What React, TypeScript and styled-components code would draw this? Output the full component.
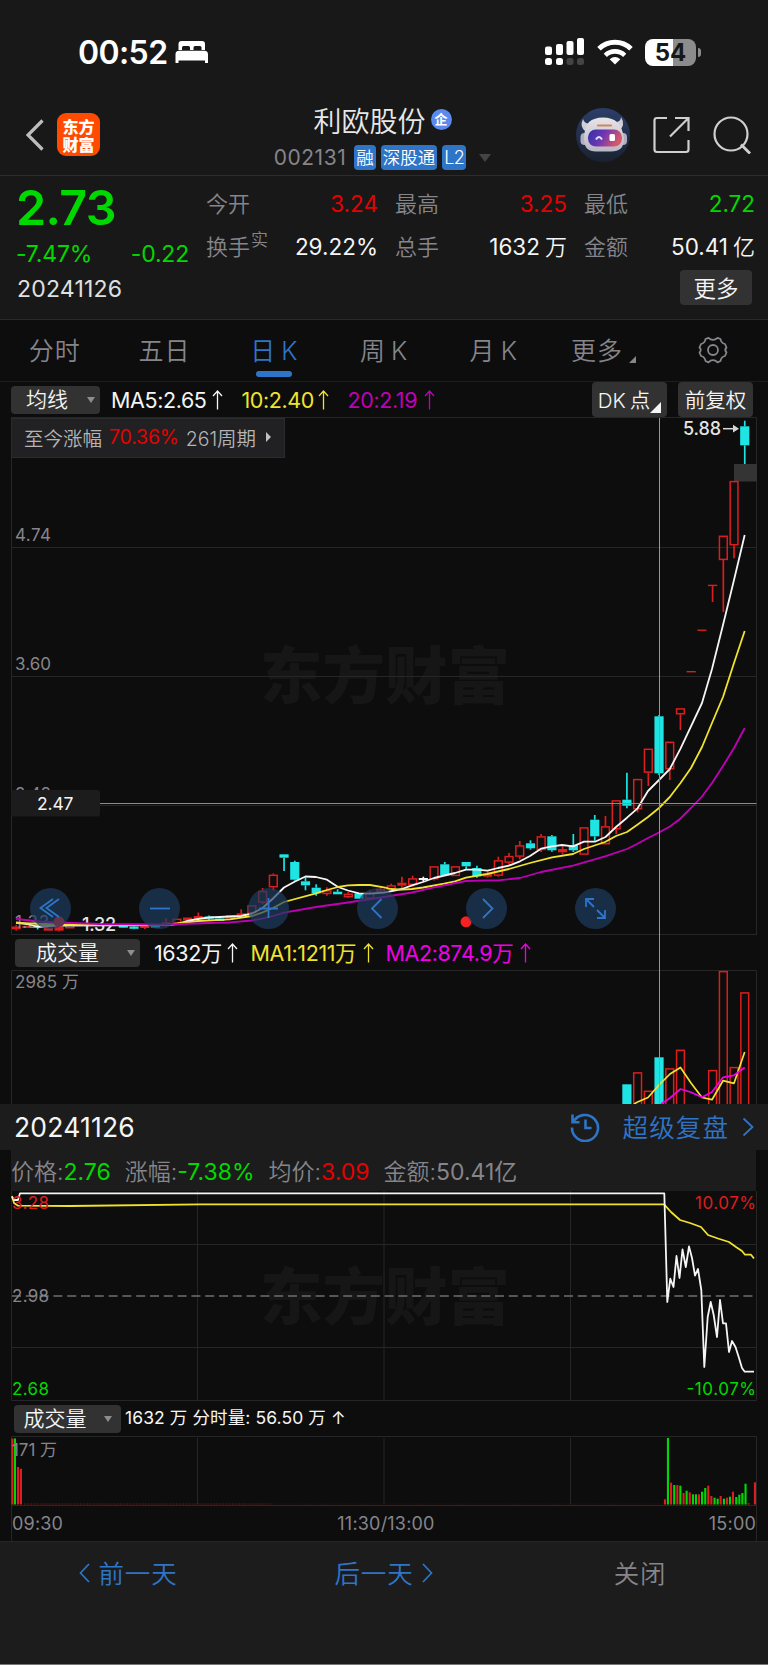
import type { ReactNode } from "react";
import styled, { createGlobalStyle, css } from "styled-components";

const color = {
  up: "#e60000",
  down: "#00d900",
  candleUp: "#dc1e1e",
  candleDown: "#1ee4e4",
  blue: "#2e75c8",
  yellow: "#f0e32e",
  magenta: "#c000b8",
  pink: "#f000e6",
  white: "#f5f5f5",
  gray: "#85858b",
  grid: "#262626",
  ground: "#0d0d0d",
  header: "#181818",
  panel: "#1c1c1c",
  button: "#323232",
};

type Candle = {
  i: number;
  kind: "hollow" | "solid" | "down" | "flat";
  high: number;
  top: number;
  bottom: number;
  low: number;
};

const c = (
  i: number,
  kind: Candle["kind"],
  high: number,
  top: number,
  bottom: number,
  low: number
): Candle => ({ i, kind, high, top, bottom, low });

const candles: Candle[] = [
  c(0, "solid", 925, 926.5, 929.3, 930.7),
  c(1, "solid", 925.5, 926, 928, 928),
  c(2, "down", 925, 926, 928, 929.5),
  c(3, "solid", 927, 927.5, 930.7, 930.7),
  c(4, "solid", 926.5, 927, 930.7, 931.5),
  c(5, "hollow", 922, 924.5, 928.3, 928.3),
  c(10, "down", 925, 925.5, 927.7, 928),
  c(11, "down", 925, 926.5, 928.8, 929.3),
  c(12, "solid", 925, 925.5, 928, 929),
  c(13, "down", 924.5, 925, 927.5, 928),
  c(14, "solid", 918.3, 922.3, 926, 926.5),
  c(15, "hollow", 918.7, 918.7, 923.5, 923.5),
  c(16, "solid", 917.5, 917.5, 920.5, 921),
  c(17, "solid", 912.5, 916, 919, 920),
  c(18, "down", 915.5, 916.5, 918.7, 920),
  c(19, "down", 917, 918.5, 921, 921),
  c(20, "hollow", 915.3, 915.3, 918.5, 918.5),
  c(21, "solid", 909.3, 913.3, 915.3, 916.5),
  c(22, "hollow", 905.3, 905.3, 913.3, 913.3),
  c(23, "hollow", 888, 891, 902.7, 904.3),
  c(24, "hollow", 873.3, 874.7, 887.3, 890.7),
  c(25, "down", 854.3, 854.3, 857.7, 871),
  c(26, "down", 860.7, 862, 879.7, 880.7),
  c(27, "down", 877.3, 881.3, 885.3, 890.3),
  c(28, "down", 884.3, 887.7, 893.3, 895.7),
  c(29, "hollow", 887.3, 890.3, 894, 895.7),
  c(30, "down", 889.3, 891.7, 894.3, 894.3),
  c(31, "hollow", 892, 893.7, 897.3, 898),
  c(32, "down", 893.3, 893.3, 898.7, 899),
  c(33, "hollow", 890.7, 892.7, 898.7, 900),
  c(34, "hollow", 887.3, 889, 892, 892),
  c(35, "hollow", 883.7, 885.3, 890, 890),
  c(36, "solid", 876.7, 882.7, 885.7, 888),
  c(37, "hollow", 875.7, 878.3, 885, 886.7),
  c(38, "flat", 876.7, 878, 880, 881.7),
  c(39, "hollow", 866.3, 866.3, 879.3, 880.5),
  c(40, "down", 862, 864.3, 875.3, 875.3),
  c(41, "hollow", 866.3, 866.3, 876, 876),
  c(42, "down", 862, 862, 866.3, 869.3),
  c(43, "down", 865.7, 868, 876.3, 877.7),
  c(44, "solid", 871.7, 873.7, 876.7, 877.7),
  c(45, "hollow", 856.7, 860.3, 875.7, 876.7),
  c(46, "hollow", 853, 856, 862.7, 865),
  c(47, "hollow", 841, 845.3, 856.7, 859.3),
  c(48, "down", 840.3, 843.3, 848.3, 849.7),
  c(49, "hollow", 834, 836.3, 850, 852),
  c(50, "down", 835, 836.3, 850.3, 851.7),
  c(51, "solid", 846.3, 849, 852.3, 854.3),
  c(52, "down", 834, 845, 850.3, 852),
  c(53, "hollow", 827.3, 827.3, 854.7, 854.7),
  c(54, "down", 815, 819.7, 836.3, 840.7),
  c(55, "hollow", 816, 826.3, 844.3, 844.3),
  c(56, "hollow", 800.3, 800.3, 829.3, 834),
  c(57, "down", 772.7, 799.7, 805.7, 808.3),
  c(58, "hollow", 779, 779, 809.3, 812.3),
  c(59, "hollow", 748.7, 748.7, 772.7, 786),
  c(60, "down", 715, 716.3, 773.3, 775),
  c(61, "hollow", 741.7, 741.7, 769.3, 780),
  c(62, "hollow", 708.3, 708.3, 714.3, 730),
  c(63, "solid", 671, 671, 672.4, 672.4),
  c(64, "solid", 629.5, 629.5, 630.9, 630.9),
  c(65, "solid", 584.7, 584.7, 586.1, 602),
  c(66, "hollow", 535.7, 535.7, 560, 612),
  c(67, "hollow", 481, 481, 545.3, 558.3),
  c(68, "down", 420.7, 426.3, 445.3, 464),
];

const ma5 =
  "16,922.5 27,924 37,926.5 59,925.5 166,925 177,924 187,921 198,919 209,917.5 241,916 252,913.5 262.6,908 273,898.5 284,887.5 295,881.5 305.5,876.5 316,877 327,879.7 338,887 348,890.5 359,893.3 370,893.7 384,892.7 402,889 412,885.3 423,882 434,878 455,873 466,869.7 477,869.7 487.6,870.7 498,868 509,865.7 520,861.3 530,856 541,848.7 552,846.3 562,845 573,846.3 584,841.7 595,841.7 605.5,837 616,827 627,817.7 637.6,808.3 648,791 659,780 669.8,769 680.5,748.7 702,703 712,669 723,625 734,580 744.7,535";
const ma10 =
  "16,923 60,924.5 100,925 166,925 198,921 230,919.3 252,916 262,912.7 273,908 284,902 316,893.3 327,890 338,887 348,885.3 359,885 370,885 384,887.3 391,889 402,889.7 412,889 423,887.5 444,883.7 455,881.3 466,877.7 487,874 509,869 530,863 552,857.3 573,854 584,849 605,842 616,836 627,832 637,825 648,817 659,808 669.8,797 680.5,783 691,768 702,747 712,723 723,697 734,663 744.7,631";
const ma20 =
  "16,919 40,921.5 60,922.5 100,924 166,924.5 209,923 230,922.3 252,920.5 262,918.7 273,916 284,912.7 316,907 348,902.5 384,897 412,892.5 434,887.3 466,881 487,880.3 498,880.3 520,878 541,872 573,865.7 605,856.3 627,849 637,844 648,838 659,832.5 670,826.5 680,819 691,808 702,796.5 712,783 723,766 734,748 744.7,728";

const volumeBars: [number, number, boolean][] = [
  [57, 1084.3, false],
  [58, 1072.3, true],
  [59, 1090.7, true],
  [60, 1057.3, false],
  [61, 1068.3, true],
  [62, 1049.7, true],
  [65, 1070, true],
  [66, 971, true],
  [67, 1067, true],
  [68, 992.3, true],
];

const minutePrice =
  "12,1197 14,1200 18,1200 20,1193.3 664.3,1193.3 667.3,1302 670.3,1278.7 673.5,1287 676.5,1256 679.5,1278 682.5,1249.5 685.8,1267 689,1246.5 692,1258 695,1275.5 698,1269 701.3,1290 704.3,1367 707.7,1317 710.7,1302 713.7,1315 717,1337 720,1300 723,1323.3 726,1323.3 729,1352 732,1341 735.5,1347 738.7,1357 742,1368 744.7,1371.7 754,1371.7";
const minuteAverage =
  "12,1196 14,1203 18,1205.7 70,1206 200,1204.3 664,1204.3 671,1212 680,1220 690,1223 701,1227 708,1235 718,1238.5 729,1242 736,1247 742,1251 745,1254.7 751,1254.7 754,1258.5";

const minuteVolume: [number, number, "r" | "g"][] = [
  [12.4, 1438.5, "r"],
  [15, 1438.5, "g"],
  [18, 1467, "r"],
  [21, 1468.7, "r"],
  [665, 1499.3, "r"],
  [668, 1438, "g"],
  [671.1, 1482.7, "r"],
  [674.3, 1485, "g"],
  [677.4, 1485, "r"],
  [680.4, 1485.7, "g"],
  [683.6, 1493, "r"],
  [686.7, 1490.7, "g"],
  [689.8, 1492.3, "r"],
  [693, 1494.3, "g"],
  [696, 1494.3, "g"],
  [699, 1494.3, "r"],
  [702.1, 1491.7, "g"],
  [705.3, 1488, "g"],
  [708.3, 1485.7, "r"],
  [711.4, 1496, "r"],
  [714.6, 1497.7, "g"],
  [717.7, 1498.7, "g"],
  [720.7, 1496, "r"],
  [724, 1498.7, "g"],
  [727, 1497.7, "r"],
  [730, 1496.7, "g"],
  [733, 1491.7, "r"],
  [736.3, 1497, "g"],
  [739.4, 1494.7, "g"],
  [742.4, 1493, "g"],
  [745.6, 1483.7, "g"],
  [748.6, 1503.3, "r"],
  [755, 1482.3, "r"],
];

const candleX = (i: number) => 16.2 + i * 10.714;

function CandleShape({ kind, i, high, top, bottom, low }: Candle) {
  const x = candleX(i);
  const stroke =
    kind === "down" ? color.candleDown : kind === "flat" ? color.white : color.candleUp;
  const hollow = kind === "hollow";
  return (
    <g stroke={stroke} strokeWidth={1.7}>
      {high < top && <line x1={x} x2={x} y1={high} y2={top} />}
      {low > bottom && <line x1={x} x2={x} y1={bottom} y2={low} />}
      <rect
        x={x - (hollow ? 3.9 : 4.6)}
        y={hollow ? top + 0.6 : top}
        width={hollow ? 7.8 : 9.2}
        height={Math.max(hollow ? bottom - top - 1.2 : bottom - top, 1)}
        fill={hollow ? "none" : stroke}
        strokeWidth={hollow ? 1.5 : 0}
      />
    </g>
  );
}

function Watermark({ y }: { y: number }) {
  return (
    <WatermarkText x={260} y={y} textLength={250} lengthAdjust="spacingAndGlyphs">
      东方财富
    </WatermarkText>
  );
}

function PriceChart() {
  return (
    <ChartSvg viewBox="0 417 768 518" height={518}>
      <Watermark y={699} />
      <path
        d="M11.5 417.5H756.5V935M11.5 417V935M11.5 547.5H756.5M11.5 676.5H756.5M11.5 805.5H756.5M11.5 934.5H756.5"
        stroke={color.grid}
        fill="none"
      />
      <AxisText x={15} y={541} textLength={36}>4.74</AxisText>
      <AxisText x={15} y={670} textLength={36}>3.60</AxisText>
      <AxisText x={15} y={799.5} textLength={36}>2.48</AxisText>
      <rect x={734} y={464} width={23} height={17.5} fill="#343434" />
      {candles.map((candle) => (
        <CandleShape key={candle.i} {...candle} />
      ))}
      <AxisText x={15} y={928} textLength={34}>1.32</AxisText>
      <line x1={70} x2={82} y1={924.5} y2={924.5} stroke={color.white} />
      <BoldLabel x={82} y={930.5} textLength={34}>1.32</BoldLabel>
      <g fill="none" strokeWidth={1.8} strokeLinejoin="round">
        <polyline points={ma5} stroke={color.white} />
        <polyline points={ma10} stroke={color.yellow} />
        <polyline points={ma20} stroke={color.magenta} />
      </g>
      <circle cx={59} cy={921.8} r={5.5} fill="#f52222" />
      <circle cx={466} cy={921.8} r={5.5} fill="#f52222" />
      <BoldLabel x={683} y={435} textLength={38}>5.88</BoldLabel>
      <path d="M723 428.7H736" stroke="#d8d8d8" strokeWidth={1.5} />
      <path d="M733 424.8L739 428.7L733 432.6Z" fill="#d8d8d8" />
      <path d="M11.5 803.5H756.5" stroke="#8c8c8c" />
      <rect x={11} y={790} width={89} height={26.5} rx={3} fill="#1c1c1c" />
      <CursorText x={37} y={810} textLength={36.5}>2.47</CursorText>
    </ChartSvg>
  );
}

function VolumeChart() {
  return (
    <ChartSvg viewBox="0 970 768 134" height={134}>
      <path d="M11.5 1104V970.5H756.5V1104" stroke={color.grid} fill="none" />
      <AxisText x={15} y={987.5} textLength={64}>2985 万</AxisText>
      {volumeBars.map(([i, top, up]) => (
        <rect
          key={i}
          x={candleX(i) - (up ? 3.9 : 4.6)}
          y={up ? top + 0.6 : top}
          width={up ? 7.8 : 9.2}
          height={140}
          fill={up ? "none" : color.candleDown}
          stroke={up ? color.candleUp : "none"}
          strokeWidth={1.5}
        />
      ))}
      <g fill="none" strokeWidth={1.7} strokeLinejoin="round">
        <polyline
          points="634,1104 637.6,1102 648,1097.5 659,1085 670,1074 680.5,1067.5 691,1083 702,1097.5 712,1099.7 723,1080.7 734,1083.3 744.7,1052"
          stroke={color.yellow}
        />
        <polyline
          points="661,1104 670,1098 680.5,1089 691,1092.3 702,1097.3 712,1092 723,1077.3 734,1075.3 744.7,1067.5"
          stroke={color.pink}
        />
      </g>
    </ChartSvg>
  );
}

function MinuteChart() {
  return (
    <ChartSvg viewBox="0 1191 768 210" height={210}>
      <Watermark y={1320} />
      <path
        d="M11.5 1191V1400.5H756.5V1191M11.5 1244.5H756.5M11.5 1347.5H756.5M197.5 1191V1400M384 1191V1400M570.5 1191V1400"
        stroke={color.grid}
        fill="none"
      />
      <path d="M12 1296H756" stroke="#6f6f74" strokeWidth={1.4} strokeDasharray="9 4.8" />
      <g fill="none" strokeWidth={1.8} strokeLinejoin="round">
        <polyline points={minuteAverage} stroke={color.yellow} />
        <polyline points={minutePrice} stroke={color.white} />
      </g>
      <AxisText x={12} y={1208.5} textLength={37} fill={color.candleUp}>3.28</AxisText>
      <AxisText x={12} y={1301.5} textLength={37}>2.98</AxisText>
      <AxisText x={12} y={1394.5} textLength={37} fill={color.down}>2.68</AxisText>
      <AxisText x={695} y={1208.5} textLength={61} fill={color.candleUp}>10.07%</AxisText>
      <AxisText x={686.5} y={1394.5} textLength={69.5} fill={color.down}>-10.07%</AxisText>
    </ChartSvg>
  );
}

function MinuteVolume() {
  return (
    <ChartSvg viewBox="0 1436 768 70" height={70}>
      <path
        d="M11.5 1506V1436.5H756.5V1506M11.5 1505.5H756.5M197.5 1438V1504M384 1438V1504M570.5 1438V1504"
        stroke={color.grid}
        fill="none"
      />
      <path d="M24 1504H270" stroke="#701212" strokeWidth={1} strokeDasharray="2 1.1" />
      <path d="M270 1504H665" stroke="#401010" strokeWidth={0.7} strokeDasharray="2 1.1" />
      {minuteVolume.map(([x, top, side]) => (
        <rect
          key={x}
          x={x - 1.1}
          y={top}
          width={2.1}
          height={1504.5 - top}
          fill={side === "r" ? color.candleUp : color.down}
        />
      ))}
      <AxisText x={12} y={1455.5} textLength={45}>171 万</AxisText>
    </ChartSvg>
  );
}

function ArrowUp() {
  return (
    <svg width="11" height="20" viewBox="0 0 11 20" fill="none" stroke="currentColor" strokeWidth="1.300">
      <path d="M5.500 19.500V1M1 6L5.500 1L10 6" />
    </svg>
  );
}

function StatusBar() {
  return (
    <StatusRow>
      <Clock>00:52</Clock>
      <svg width="34" height="24" viewBox="0 0 34 24" fill="#fff">
        <path d="M3.500 10V4Q3.500 1 6.500 1H27Q30 1 30 4V10H26.500V7.500Q26.500 6 25 6H20Q18.500 6 18.500 7.500V10H15V7.500Q15 6 13.500 6H8.500Q7 6 7 7.500V10Z" />
        <path d="M4 10.800H29.500Q33 10.800 33 14.500V23H30V20.500H3.500V23H.5V14.500Q.5 10.800 4 10.800Z" />
      </svg>
      <StatusIcons>
        <svg width="40" height="28" viewBox="0 0 40 28" fill="#fff">
          <rect x="0" y="8.500" width="7" height="8.500" rx="2" />
          <rect x="11" y="6" width="7" height="11" rx="2" />
          <rect x="21.500" y="3" width="7" height="14" rx="2" />
          <rect x="32" y="0" width="7" height="17" rx="2" />
          <rect x="0" y="20" width="7" height="7" rx="2.500" />
          <rect x="11" y="20" width="7" height="7" rx="2.500" />
          <rect x="21.500" y="20" width="7" height="7" rx="2.500" fill="#444" />
          <rect x="32" y="20" width="7" height="7" rx="2.500" fill="#444" />
        </svg>
        <svg width="36" height="26" viewBox="0 0 36 26" fill="none" stroke="#fff" strokeWidth="5">
          <path d="M2 9.800A23 23 0 0 1 34 9.800" />
          <path d="M8.300 16.300A14 14 0 0 1 27.700 16.300" strokeWidth="4.600" />
          <path d="M12.700 20.300Q18 15.500 23.300 20.300L18 25.500Z" fill="#fff" stroke="none" />
        </svg>
        <Battery>54</Battery>
      </StatusIcons>
    </StatusRow>
  );
}

function RobotAvatar() {
  return (
    <svg width="54" height="54" viewBox="0 0 54 54">
      <defs>
        <linearGradient id="sky" x1="0" x2="0" y1="0" y2="1">
          <stop offset="0" stopColor="#2c3e69" />
          <stop offset="1" stopColor="#192231" />
        </linearGradient>
        <linearGradient id="visor" x1="0" x2="1" y1="0" y2="0.3">
          <stop offset="0" stopColor="#2d31a8" />
          <stop offset="0.5" stopColor="#6f35b4" />
          <stop offset="1" stopColor="#d5586a" />
        </linearGradient>
        <linearGradient id="shell" x1="0" x2="0" y1="0" y2="1">
          <stop offset="0" stopColor="#e8e4e6" />
          <stop offset="1" stopColor="#b9b6c4" />
        </linearGradient>
      </defs>
      <circle cx="27" cy="27" r="27" fill="url(#sky)" />
      <path
        d="M7 11Q3 19 10 24L16 15Q9 17 7 11ZM45 9Q50 17 43 23L37 14Q45 15 45 9Z"
        fill="#d0ced6"
      />
      <rect x="4.500" y="25" width="8" height="12" rx="4" fill="#b0aebf" />
      <rect x="43" y="25" width="8" height="12" rx="4" fill="#b0aebf" />
      <path
        d="M8 31Q8 20 13 14Q18 9.500 27 9.500Q36 9.500 41 14Q47 20 48 31Q48 43.500 35 43.500H20Q8 43.500 8 31Z"
        fill="url(#shell)"
      />
      <rect x="12" y="21.500" width="34" height="17" rx="8" fill="url(#visor)" />
      <path d="M22 17.500H35" stroke="#c98962" strokeWidth="2.200" strokeLinecap="round" />
      <path d="M20 31.500Q23 26.500 26 31.500" stroke="#d9e6ff" strokeWidth="2" fill="none" />
      <rect x="33.500" y="26" width="5.500" height="7" rx="1.500" fill="#fff" />
    </svg>
  );
}

function Header() {
  return (
    <HeaderRow>
      <HeaderLeft>
        <svg width="18" height="32" viewBox="0 0 18 32" fill="none" stroke="#bdbdbd" strokeWidth="3.200">
          <path d="M16.500 1.500L2 16L16.500 30.500" />
        </svg>
        <Logo>
          东方
          <br />
          财富
        </Logo>
      </HeaderLeft>
      <HeaderCenter>
        <StockName>
          利欧股份
          <CompanyMark>企</CompanyMark>
        </StockName>
        <StockMeta>
          <StockCode>002131</StockCode>
          <Badge>融</Badge>
          <Badge>深股通</Badge>
          <Badge $latin>L2</Badge>
          <MetaCaret $size={6} $color="#444" />
        </StockMeta>
      </HeaderCenter>
      <HeaderRight>
        <RobotAvatar />
        <svg width="37" height="38" viewBox="0 0 37 38" fill="none" stroke="#cfcfcf" strokeWidth="2.200">
          <path d="M14 2H4Q1.500 2 1.500 4.500V33.500Q1.500 36 4 36H33Q35.500 36 35.500 33.500V24" />
          <path d="M22 2H35.500V15M35.500 2L17 20.500" />
        </svg>
        <svg width="38" height="38" viewBox="0 0 38 38" fill="none" stroke="#cfcfcf" strokeWidth="2.200">
          <circle cx="18" cy="18" r="16.500" />
          <path d="M28 28.500L37 37.500" strokeWidth="2.800" />
        </svg>
      </HeaderRight>
    </HeaderRow>
  );
}

type StatProps = {
  label: ReactNode;
  value: string;
  tone?: string;
  unit?: string;
};

function Stat({ label, value, tone = color.white, unit }: StatProps) {
  return (
    <StatCell>
      <StatLabel>{label}</StatLabel>
      <StatValue $tone={tone}>
        {value}
        {unit && <Unit>{unit}</Unit>}
      </StatValue>
    </StatCell>
  );
}

function Quote() {
  return (
    <QuoteBlock>
      <QuoteTop>
        <div>
          <LastPrice>2.73</LastPrice>
          <Change>
            <span>-7.47%</span>
            <span>-0.22</span>
          </Change>
        </div>
        <StatGrid>
          <Stat label="今开" value="3.24" tone={color.up} />
          <Stat label="最高" value="3.25" tone={color.up} />
          <Stat label="最低" value="2.72" tone={color.down} />
          <Stat
            label={
              <>
                换手<sup>实</sup>
              </>
            }
            value="29.22%"
          />
          <Stat label="总手" value="1632" unit="万" />
          <Stat label="金额" value="50.41" unit="亿" />
        </StatGrid>
      </QuoteTop>
      <QuoteBottom>
        <QuoteDate>20241126</QuoteDate>
        <MoreButton>更多</MoreButton>
      </QuoteBottom>
    </QuoteBlock>
  );
}

function Tabs() {
  return (
    <TabRow>
      <Tab>分时</Tab>
      <Tab>五日</Tab>
      <Tab $active>日 K</Tab>
      <Tab>周 K</Tab>
      <Tab>月 K</Tab>
      <Tab>
        更多
        <Corner $size={7} $color={color.gray} />
      </Tab>
      <Tab>
        <svg width="30" height="28" viewBox="0 0 30 28" fill="none" stroke={color.gray} strokeWidth="1.800">
          <circle cx="15" cy="14" r="5" />
          <path
            d="M10.500 1.800Q12.500 3.800 15 3.800T19.500 1.800L22.500 3Q23 7 27 8L28.500 11.500Q26 14 28.500 16.500L27 20Q23 21 22.500 25L19.500 26.300Q17.500 24.200 15 24.200T10.500 26.300L7.500 25Q7 21 3 20L1.500 16.500Q4 14 1.500 11.500L3 8Q7 7 7.500 3Z"
            strokeLinejoin="round"
          />
        </svg>
      </Tab>
    </TabRow>
  );
}

function FloatingControls() {
  return (
    <ControlRow>
      <Control>
        <path d="M23 11L10.500 20L23 29M29 11L16.500 20L29 29" />
      </Control>
      <Control>
        <path d="M11 20.500H31" />
      </Control>
      <Control>
        <path d="M11 20.500H30M20.500 10V30" />
      </Control>
      <Control>
        <path d="M24.500 11L15 20.500L24.500 30" />
      </Control>
      <Control>
        <path d="M17 11L26.500 20.500L17 30" />
      </Control>
      <Control>
        <path d="M11 19V11H19M11.500 11.500L19 19M30 22V30H22M29.500 29.500L22 22" />
      </Control>
    </ControlRow>
  );
}

function Control({ children }: { children: ReactNode }) {
  return (
    <ControlButton>
      <svg width="41" height="41" viewBox="0 0 41 41" fill="none" stroke={color.blue} strokeWidth="1.800">
        {children}
      </svg>
    </ControlButton>
  );
}

function KLine() {
  return (
    <KLineArea>
      <IndicatorRow>
        <Selector $width={89} $left={15} $right={5}>
          均线
          <Caret $size={4} $color="#8d8d92" />
        </Selector>
        <Reading $tone={color.white} $left={11} $width={112}>
          MA5:2.65
          <ArrowUp />
        </Reading>
        <Reading $tone={color.yellow} $left={18.5} $width={87}>
          10:2.40
          <ArrowUp />
        </Reading>
        <Reading $tone={color.magenta} $left={19} $width={87}>
          20:2.19
          <ArrowUp />
        </Reading>
        <ChipGroup>
          <Chip>
            DK 点
            <Corner $size={11} $color={color.white} />
          </Chip>
          <Chip>前复权</Chip>
        </ChipGroup>
      </IndicatorRow>
      <PriceChart />
      <RiseTip>
        至今涨幅 <b>70.36%</b> 261周期
        <TipArrow />
      </RiseTip>
      <FloatingControls />
      <IndicatorRow $inset={15}>
        <Selector $width={125} $left={21} $right={5}>
          成交量
          <Caret $size={4} $color="#8d8d92" />
        </Selector>
        <Reading $tone={color.white} $left={14} $width={84}>
          1632万
          <ArrowUp />
        </Reading>
        <Reading $tone={color.yellow} $left={12.5} $width={123}>
          MA1:1211万
          <ArrowUp />
        </Reading>
        <Reading $tone={color.pink} $left={12} $width={145}>
          MA2:874.9万
          <ArrowUp />
        </Reading>
      </IndicatorRow>
      <VolumeChart />
      <Crosshair />
    </KLineArea>
  );
}

function ReplayPanel() {
  return (
    <>
      <PanelHead>
        <PanelDate>20241126</PanelDate>
        <ReplayLink>
          <svg width="30" height="30" viewBox="0 0 30 30" fill="none" stroke="currentColor" strokeWidth="2.600">
            <path d="M3.200 10.500A13 13 0 1 1 2 15.500M2.500 2.500V10.200H9.500M15.500 7.500V16H21.500" />
          </svg>
          <LinkText>超级复盘</LinkText>
          <svg width="12" height="20" viewBox="0 0 12 20" fill="none" stroke="currentColor" strokeWidth="1.800">
            <path d="M1.500 1.500L10.500 10L1.500 18.500" />
          </svg>
        </ReplayLink>
      </PanelHead>
      <InfoRow>
        <Info $tone={color.down}>
          价格:<b>2.76</b>
        </Info>
        <Info $tone={color.down}>
          涨幅:<b>-7.38%</b>
        </Info>
        <Info $tone={color.up}>
          均价:<b>3.09</b>
        </Info>
        <Info $tone={color.gray}>
          金额:<b>50.41亿</b>
        </Info>
      </InfoRow>
      <MinuteChart />
      <IndicatorRow $inset={14}>
        <Selector $width={107} $left={9.5} $right={9}>
          成交量
          <Caret $size={4} $color="#8d8d92" />
        </Selector>
        <MinuteReading>1632 万 分时量: 56.50 万 ↑</MinuteReading>
      </IndicatorRow>
      <MinuteVolume />
      <TimeAxis>
        <span>09:30</span>
        <span>11:30/13:00</span>
        <span>15:00</span>
      </TimeAxis>
    </>
  );
}

function Footer() {
  return (
    <FooterRow>
      <FooterItem $tone={color.blue}>
        <svg width="11" height="20" viewBox="0 0 11 20" fill="none" stroke="currentColor" strokeWidth="1.700">
          <path d="M10 1L1.500 10L10 19" />
        </svg>
        <LinkText>前一天</LinkText>
      </FooterItem>
      <FooterItem $tone={color.blue}>
        <LinkText>后一天</LinkText>
        <svg width="11" height="20" viewBox="0 0 11 20" fill="none" stroke="currentColor" strokeWidth="1.700">
          <path d="M1 1L9.500 10L1 19" />
        </svg>
      </FooterItem>
      <FooterItem $tone={color.gray}>
        <LinkText>关闭</LinkText>
      </FooterItem>
    </FooterRow>
  );
}

function App() {
  return (
    <>
      <GlobalStyle />
      <Screen>
        <TopArea>
          <StatusBar />
          <Header />
          <Quote />
        </TopArea>
        <Tabs />
        <KLine />
        <ReplayPanel />
        <Footer />
      </Screen>
    </>
  );
}

const GlobalStyle = createGlobalStyle`
  * {
    box-sizing: border-box;
  }

  body {
    margin: 0;
    background: ${color.ground};
    font-family: Inter, "Noto Sans CJK SC", sans-serif;
  }

  svg {
    display: block;
    flex-shrink: 0;
  }
`;

const Screen = styled.main`
  display: flex;
  flex-direction: column;
  width: 768px;
  height: 1665px;
  overflow: hidden;
  background: ${color.ground};
  white-space: nowrap;
`;

const TopArea = styled.div`
  background: ${color.header};
`;

const StatusRow = styled.div`
  display: flex;
  align-items: center;
  height: 104px;
  padding: 0 67px 0 78px;
  gap: 7px;
`;

const Clock = styled.span`
  width: 90px;
  color: #fff;
  font-size: 32px;
  font-weight: 600;
  letter-spacing: -0.6px;
`;

const StatusIcons = styled.div`
  display: flex;
  align-items: center;
  gap: 12px;
  margin-left: auto;
`;

const Battery = styled.span`
  position: relative;
  width: 51px;
  height: 27px;
  margin-right: 5px;
  border-radius: 8px;
  background: linear-gradient(90deg, #fff 54%, #8c8c8c 54%);
  color: ${color.header};
  font-size: 24px;
  font-weight: 700;
  line-height: 27px;
  text-align: center;

  &::after {
    content: "";
    position: absolute;
    top: 9px;
    right: -5px;
    width: 3px;
    height: 9px;
    border-radius: 0 4px 4px 0;
    background: #8c8c8c;
  }
`;

const HeaderRow = styled.header`
  display: grid;
  grid-template-columns: 1fr auto 1fr;
  height: 72px;
  padding: 0 17px 0 14px;
  border-bottom: 1px solid #2c2c2c;
`;

const HeaderLeft = styled.div`
  display: flex;
  align-items: flex-start;
  gap: 13px;
  padding: 9px 0 0 12px;

  & > svg {
    margin-top: 6px;
  }
`;

const Logo = styled.div`
  width: 43px;
  height: 43px;
  padding-top: 4px;
  border-radius: 9px;
  background: #ff4a00;
  color: #fff;
  font-family: "Noto Sans CJK SC", sans-serif;
  font-size: 16px;
  font-weight: 900;
  line-height: 18px;
  text-align: center;
`;

const HeaderCenter = styled.div`
  display: flex;
  flex-direction: column;
  align-items: center;
`;

const StockName = styled.div`
  display: flex;
  align-items: center;
  gap: 5px;
  height: 31px;
  color: #e8e8e8;
  font-size: 28px;
  font-weight: 350;
`;

const CompanyMark = styled.span`
  width: 21px;
  height: 21px;
  border-radius: 50%;
  background: #5b8aec;
  color: #fff;
  font-size: 13px;
  font-weight: 700;
  line-height: 20px;
  text-align: center;
`;

const StockMeta = styled.div`
  display: flex;
  align-items: center;
  gap: 5px;
  height: 45px;
`;

const StockCode = styled.span`
  margin-right: 3px;
  color: ${color.gray};
  font-size: 21px;
  letter-spacing: 0.5px;
`;

const Badge = styled.span<{ $latin?: boolean }>`
  height: 25px;
  padding: 0 2px;
  border-radius: 4px;
  background: ${color.blue};
  color: #fff;
  font-size: ${({ $latin }) => ($latin ? 18 : 17.5)}px;
  font-weight: 350;
  line-height: 25px;
  letter-spacing: ${({ $latin }) => ($latin ? -0.6 : 0)}px;
`;

const Caret = styled.i<{ $size: number; $color: string }>`
  border: ${({ $size }) => $size}px solid transparent;
  border-top: ${({ $size }) => $size + 2}px solid ${({ $color }) => $color};
  border-bottom: 0;
`;

const MetaCaret = styled(Caret)`
  margin-left: 8px;
`;

const HeaderRight = styled.div`
  display: flex;
  align-items: flex-start;
  justify-content: flex-end;
  gap: 23px;
  padding-top: 4px;

  & > svg + svg {
    margin-top: 8px;
  }
`;

const QuoteBlock = styled.section`
  height: 144px;
  border-bottom: 1px solid #2a2a2a;
`;

const QuoteTop = styled.div`
  display: grid;
  grid-template-columns: 172px 1fr;
  column-gap: 17px;
  height: 94px;
  padding: 0 12px 0 17px;
`;

const LastPrice = styled.div`
  padding-top: 3px;
  margin-left: -1px;
  color: ${color.down};
  font-size: 48.5px;
  font-weight: 600;
  line-height: 58px;
  letter-spacing: -0.7px;
`;

const Change = styled.div`
  display: flex;
  justify-content: space-between;
  margin-left: -1px;
  color: ${color.down};
  font-size: 23px;
  line-height: 35px;
  letter-spacing: -0.2px;
`;

const StatGrid = styled.div`
  display: grid;
  grid-template-columns: 172px 172px 171px;
  grid-auto-rows: 43px;
  column-gap: 17px;
  padding-top: 6px;
`;

const StatCell = styled.div`
  display: flex;
  justify-content: space-between;
  line-height: 44px;
`;

const StatLabel = styled.span`
  color: ${color.gray};
  font-size: 22px;
  font-weight: 350;

  & > sup {
    display: inline-block;
    margin-left: 1px;
    font-size: 17px;
    line-height: 20px;
    vertical-align: 9px;
  }
`;

const StatValue = styled.span<{ $tone: string }>`
  color: ${({ $tone }) => $tone};
  font-size: 22.5px;
`;

const Unit = styled.span`
  margin-left: 5px;
  font-size: 22px;
  font-weight: 350;
`;

const QuoteBottom = styled.div`
  display: flex;
  justify-content: space-between;
  padding: 0 16px 0 17px;
`;

const QuoteDate = styled.span`
  color: #e0e0e0;
  font-size: 23px;
  line-height: 39px;
  letter-spacing: 0.2px;
`;

const MoreButton = styled.button`
  width: 72px;
  height: 35px;
  padding: 0 0 2px;
  border: 0;
  border-radius: 4px;
  background: ${color.button};
  color: ${color.white};
  font: 350 22.5px Inter, "Noto Sans CJK SC", sans-serif;
`;

const TabRow = styled.nav`
  display: grid;
  grid-template-columns: repeat(7, 1fr);
  height: 62px;
  border-bottom: 1px solid #1d1d1d;
`;

const Tab = styled.div<{ $active?: boolean }>`
  position: relative;
  display: flex;
  align-items: center;
  justify-content: center;
  gap: 6px;
  padding-bottom: 3px;
  color: ${({ $active }) => ($active ? color.blue : color.gray)};
  font-size: 25px;
  font-weight: 350;
  letter-spacing: 1px;
  word-spacing: -3px;

  & > svg {
    margin-top: 2px;
  }

  ${({ $active }) =>
    $active &&
    css`
      &::after {
        content: "";
        position: absolute;
        bottom: 4px;
        width: 36px;
        height: 6px;
        border-radius: 3px;
        background: ${color.blue};
      }
    `}
`;

const Corner = styled.i<{ $size: number; $color: string }>`
  align-self: flex-end;
  margin-bottom: ${({ $size }) => ($size < 10 ? 15 : 3)}px;
  border-bottom: ${({ $size }) => $size}px solid ${({ $color }) => $color};
  border-left: ${({ $size }) => $size}px solid transparent;
`;

const KLineArea = styled.section`
  position: relative;
  height: 722px;
`;

const IndicatorRow = styled.div<{ $inset?: number }>`
  display: flex;
  align-items: center;
  height: 35px;
  padding: 0 15px 0 ${({ $inset }) => $inset ?? 11}px;
`;

const Selector = styled.div<{ $width: number; $left: number; $right: number }>`
  display: flex;
  align-items: center;
  justify-content: space-between;
  width: ${({ $width }) => $width}px;
  height: 28px;
  padding: 0 ${({ $right }) => $right}px 0 ${({ $left }) => $left}px;
  border-radius: 4px;
  background: ${color.button};
  color: ${color.white};
  font-size: 21px;
  font-weight: 350;
  line-height: 26px;
`;

const Reading = styled.div<{ $tone: string; $left: number; $width: number }>`
  display: flex;
  align-items: center;
  justify-content: space-between;
  width: ${({ $width }) => $width}px;
  margin-left: ${({ $left }) => $left}px;
  color: ${({ $tone }) => $tone};
  font-size: 21.5px;
  line-height: 26px;
  letter-spacing: -0.4px;
`;

const ChipGroup = styled.div`
  display: flex;
  gap: 11px;
  margin-left: auto;
`;

const Chip = styled.div`
  display: flex;
  align-items: center;
  justify-content: center;
  width: 75px;
  height: 35px;
  padding-bottom: 1px;
  border-radius: 4px;
  background: ${color.button};
  color: ${color.white};
  font-size: 20.5px;
  font-weight: 350;
  word-spacing: -2px;
`;

const ChartSvg = styled.svg.attrs({ width: 768 })`
  overflow: hidden;
`;

const AxisText = styled.text`
  fill: ${({ fill }) => fill ?? color.gray};
  font-size: 17px;
`;

const BoldLabel = styled.text`
  fill: #e4e4e4;
  font-size: 18px;
  font-weight: 500;
`;

const CursorText = styled.text`
  fill: ${color.white};
  font-size: 17.5px;
`;

const WatermarkText = styled.text`
  fill: #161616;
  font-family: "Noto Sans CJK SC", sans-serif;
  font-size: 62px;
  font-weight: 900;
`;

const RiseTip = styled.div`
  position: absolute;
  top: 36px;
  left: 11px;
  display: flex;
  align-items: center;
  gap: 7px;
  width: 274px;
  height: 40px;
  padding: 0 0 2px 12px;
  border: 1px solid #2b2b2d;
  background: #212123;
  color: #b4b4b4;
  font-size: 19.5px;
  font-weight: 350;

  & > b {
    color: ${color.up};
    font-weight: 400;
    letter-spacing: -0.2px;
  }
`;

const TipArrow = styled.i`
  margin-left: 3px;
  border: 5px solid transparent;
  border-left-color: #c0c0c0;
  border-right: 0;
`;

const ControlRow = styled.div`
  position: absolute;
  top: 506px;
  left: 30px;
  display: flex;
  gap: 68px;
`;

const ControlButton = styled.button`
  width: 41px;
  height: 41px;
  padding: 0;
  border: 0;
  border-radius: 50%;
  background: rgba(29, 60, 98, 0.68);
`;

const Crosshair = styled.div`
  position: absolute;
  top: 36px;
  bottom: 0;
  left: 659px;
  width: 1px;
  background: #969696;
`;

const PanelHead = styled.div`
  display: flex;
  align-items: center;
  justify-content: space-between;
  height: 46px;
  padding: 0 14px;
  background: ${color.panel};
`;

const PanelDate = styled.span`
  color: ${color.white};
  font-size: 26.5px;
  letter-spacing: 0.2px;
`;

const ReplayLink = styled.div`
  display: flex;
  align-items: center;
  color: ${color.blue};
  font-size: 25.5px;
  letter-spacing: 1.1px;

  & > svg:first-child {
    margin-right: 23px;
  }

  & > svg:last-child {
    margin-left: 13px;
  }
`;

const LinkText = styled.span`
  font-weight: 350;
  margin-top: -3px;
`;

const InfoRow = styled.div`
  display: flex;
  align-items: center;
  gap: 14px;
  height: 41px;
  margin: 0 12px 0 11px;
  padding-bottom: 2px;
  background: ${color.panel};
`;

const Info = styled.span<{ $tone: string }>`
  color: ${color.gray};
  font-size: 23px;
  font-weight: 350;

  & > b {
    color: ${({ $tone }) => $tone};
    font-weight: 400;
  }
`;

const MinuteReading = styled.span`
  margin-left: 4px;
  color: ${color.white};
  font-size: 17.5px;
  line-height: 24px;
  letter-spacing: 0.1px;
  padding-bottom: 1px;
`;

const TimeAxis = styled.div`
  display: flex;
  align-items: center;
  justify-content: space-between;
  height: 35px;
  margin: 0 11px;
  border: solid ${color.grid};
  border-width: 0 1px;
  color: ${color.gray};
  font-size: 18px;
  letter-spacing: 0.2px;
`;

const FooterRow = styled.footer`
  display: grid;
  grid-template-columns: repeat(3, 1fr);
  height: 124px;
  padding-top: 13px;
  border-top: 1px solid #262626;
  border-bottom: 1px solid #777;
  background: ${color.panel};
`;

const FooterItem = styled.div<{ $tone: string }>`
  display: flex;
  align-items: center;
  justify-content: center;
  gap: 9px;
  height: 36px;
  color: ${({ $tone }) => $tone};
  font-size: 25.5px;
  letter-spacing: 0.8px;
`;

export default App;
